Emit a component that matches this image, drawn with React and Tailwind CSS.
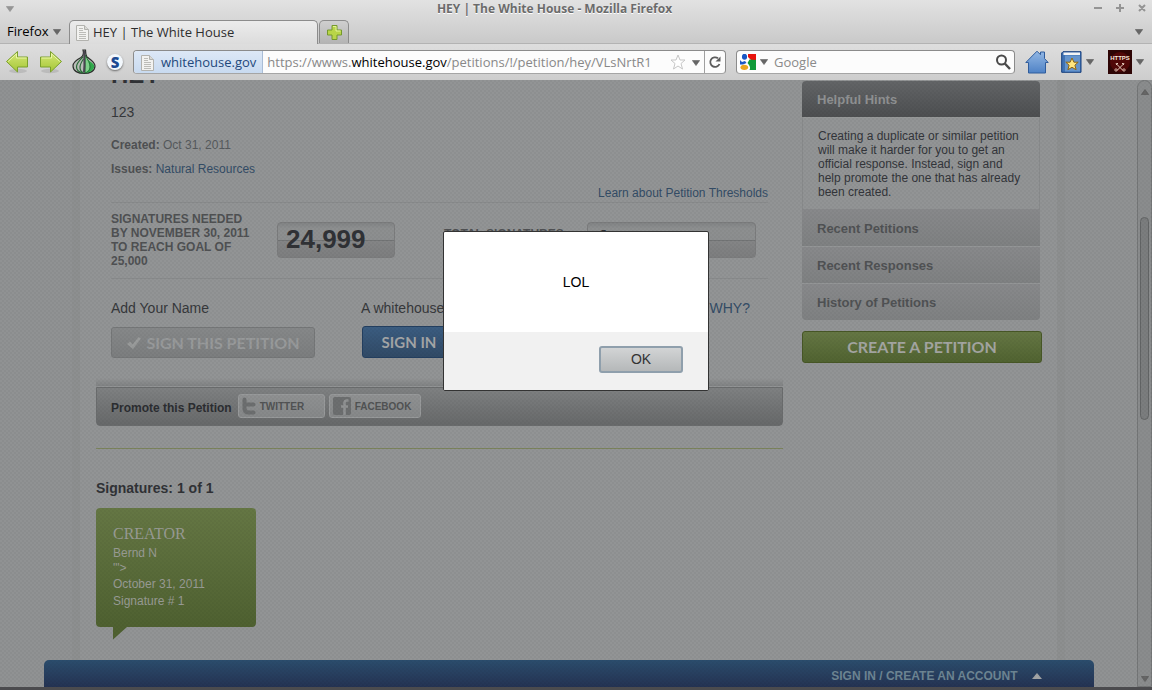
import React from "react";

const chromeFont = "font-['Open_Sans','Noto_Sans',sans-serif]";

function Caret({ className = "" }) {
  return (
    <svg viewBox="0 0 8 6" className={"h-[6px] w-2 shrink-0 " + className} aria-hidden="true">
      <path d="M.3.5h7.4L4 5.6z" fill="#666" stroke="#505050" strokeWidth=".5" />
    </svg>
  );
}

function PageIcon({ className = "" }) {
  return (
    <svg viewBox="0 0 13 16" className={"h-4 w-[13px] shrink-0 " + className} aria-hidden="true">
      <path d="M.5.5h8l4 4v11H.5z" fill="#f2f2f0" stroke="#b2b2ae" />
      <path d="M8.5.5v4h4" fill="#d9d9d6" stroke="#b2b2ae" />
      <path d="M3 3.5h4M3 5.5h4M3 7.5h7M3 9.5h7M3 11.5h7M3 13.5h7" stroke="#bcbcb8" />
    </svg>
  );
}

function Arrow({ flip }) {
  return (
    <svg viewBox="0 0 24 24" className={"h-6 w-6 " + (flip ? "-scale-x-100" : "")} aria-hidden="true">
      <defs>
        <linearGradient id={flip ? "ga" : "gb"} x1="0" y1="0" x2="0" y2="1">
          <stop offset="0" stopColor="#d6e878" />
          <stop offset="1" stopColor="#a4c636" />
        </linearGradient>
      </defs>
      <ellipse cx="13" cy="21" rx="9" ry="2.2" fill="#000" opacity=".1" />
      <path
        d="M1.5 11.5 12.5 1.500V7H22.500V17H12.500V22z"
        fill={flip ? "url(#ga)" : "url(#gb)"}
        stroke="#7aa02c"
        strokeLinejoin="round"
      />
      <path d="M3.200 11.500 11.500 3.800V8H21.500" fill="none" stroke="#eaf5a8" />
    </svg>
  );
}

function OnionIcon() {
  return (
    <svg viewBox="0 0 24 26" className="h-[26px] w-6" aria-hidden="true">
      <path d="M11 1C12 4 12 6 9 8.500 4 11 1 13 1 17c0 5 5 7.500 11 7.500S23 22 23 17c0-4-4-6-8-9-1.500-2-1.500-4-1.500-7z" fill="#b9bdb8" stroke="#2c2f2c" strokeWidth="1.200" />
      <path d="M13 6c0 4 6 6 9 10 1 4-3 8-9.500 8z" fill="#2fa84a" />
      <path d="M13 6c3 5 5 8 5 12 0 3-2 5-5 6z" fill="#7fd08a" stroke="#1c6b2d" strokeWidth=".9" />
      <path d="M11 8C7 12 4.500 14 4.500 18c0 3 2.500 5 6 6M11.500 10c-2.500 3.500-3.500 5.500-3.500 8.500 0 3 1.500 4.500 3.500 5.500" fill="none" stroke="#2a6b38" strokeWidth="1.200" />
      <path d="M12.500 1.500c-.8 6 .8 10-.5 22" fill="none" stroke="#4a4550" strokeWidth="2" />
    </svg>
  );
}

function ScriptIcon() {
  return (
    <span className="flex h-4 w-4 items-center justify-center rounded-full bg-[#f3f8fd] text-[15px] leading-4 font-extrabold text-[#1d4a92] shadow-[0_1px_2px_rgba(0,0,0,0.5)]">
      S
    </span>
  );
}

function TitleBar() {
  return (
    <div className="flex h-5 items-start">
      <Caret className="mt-[6px] ml-[6px] opacity-60" />
      <h1 className="flex-1 pl-[7px] text-center text-xs leading-[18px] font-bold text-[#6b6b6b] [text-shadow:0_1px_0_#fff]">
        HEY | The White House - Mozilla Firefox
      </h1>
      <svg viewBox="0 0 60 12" className="mt-[2px] mr-1 h-3 w-[60px]" fill="none" stroke="#949494" strokeWidth="2" aria-hidden="true">
        <path d="M6 6h8M28 6h8M32 2v8M51 3l6 6M57 3l-6 6" />
      </svg>
    </div>
  );
}

function TabBar() {
  return (
    <div className="flex h-6 items-end border-b border-[#b3b3b3]">
      <button className="flex h-6 w-[69px] shrink-0 items-center gap-1 pt-px pl-[7px] text-[13px] text-black">
        Firefox
        <Caret />
      </button>
      <div className="-mb-px flex h-6 w-[249px] items-center gap-1 rounded-t-[5px] border border-b-0 border-[#8c8c8c] bg-gradient-to-b from-[#ececec] to-[#dcdcdc] pl-[6px] text-[13px] text-[#2e2e2e]">
        <PageIcon />
        HEY | The White House
      </div>
      <button aria-label="Open a new tab" className="ml-px flex h-[23px] w-[30px] items-center justify-center rounded-t-[5px] border border-b-0 border-[#8c8c8c] bg-gradient-to-b from-[#cfcfcf] to-[#b4b4b4]">
        <svg viewBox="0 0 17 17" className="h-[17px] w-[17px]" aria-hidden="true">
          <path d="M6 1.500h5V6h4.500v5H11v4.500H6V11H1.500V6H6z" fill="#b9d548" stroke="#75992c" />
          <path d="M7 2.500h3V7h4.500" fill="none" stroke="#e2f29a" />
        </svg>
      </button>
      <Caret className="mr-[9px] mb-2 ml-auto" />
    </div>
  );
}

function ToolBar() {
  return (
    <div className="flex h-9 items-center bg-gradient-to-b from-[#dedede] to-[#cdcdcd] pr-2 pl-[5px]">
      <button aria-label="Back"><Arrow /></button>
      <button aria-label="Forward" className="ml-[10px]"><Arrow flip /></button>
      <button aria-label="Tor" className="ml-[9px]"><OnionIcon /></button>
      <button aria-label="Scripts" className="ml-[11px]"><ScriptIcon /></button>
      <div className="ml-[10px] flex h-6 flex-1 overflow-hidden rounded-[4px] border border-[#8b8b8b] border-b-[#a5a5a5] bg-[#fcfcfc]">
        <span className="flex items-center gap-[7px] border-r border-[#a9bdd6] bg-gradient-to-b from-[#dde8f6] to-[#c8daf0] pt-px pr-[6px] pl-[7px] text-[13px] text-[#23497c]">
          <PageIcon />
          whitehouse.gov
        </span>
        <span className="flex flex-1 items-center overflow-hidden pt-px pl-1 text-[13px] whitespace-nowrap text-[#888]">
          https://wwws.<span className="text-black">whitehouse.gov</span>/petitions/!/petition/hey/VLsNrtR1
        </span>
        <svg viewBox="0 0 16 16" className="mt-[3px] h-4 w-4 shrink-0" aria-hidden="true">
          <path d="M8 1l2 5h5l-4 3.500 1.500 5.500L8 12l-4.500 3L5 9.500 1 6h5z" fill="#fff" stroke="#c6c6c6" strokeLinejoin="round" />
        </svg>
        <Caret className="mt-[9px] mr-1 ml-[6px]" />
        <button aria-label="Reload" className="flex w-[21px] shrink-0 items-center justify-center border-l border-[#a0a0a0]">
          <svg viewBox="0 0 14 14" className="h-[14px] w-[14px]" aria-hidden="true">
            <path d="M11.500 9A4.800 4.800 0 1 1 10 3.300" fill="none" stroke="#5c5c5c" strokeWidth="1.800" />
            <path d="M12.500 1.500v5H7.500z" fill="#5c5c5c" />
          </svg>
        </button>
      </div>
      <div className="ml-[10px] flex h-6 w-[279px] items-center rounded-[4px] border border-[#8b8b8b] border-b-[#a5a5a5] bg-[#fcfcfc] px-[3px]">
        <svg viewBox="0 0 16 16" className="h-4 w-4 shrink-0" aria-hidden="true">
          <rect width="16" height="16" fill="#fff" />
          <path d="M8 0h8v6H11L8 3z" fill="#e8120c" />
          <path d="M9.500 5.500 16 6v10h-6.500C11 13 9 11 7.500 9z" fill="#109a38" />
          <ellipse cx="4.500" cy="2.800" rx="2.600" ry="3" fill="#1b57c4" />
          <path d="M0 6 2 8l3-1 1.500 2L3 10.500H0z" fill="#1b57c4" />
          <ellipse cx="4.300" cy="13.300" rx="3.800" ry="2.600" fill="#eaa51e" />
        </svg>
        <Caret className="ml-1" />
        <input aria-label="Search" placeholder="Google" className="ml-[6px] min-w-0 flex-1 bg-transparent pt-px text-[13px] outline-none placeholder:text-[#8a8a8a]" />
        <svg viewBox="0 0 16 16" className="h-4 w-4 shrink-0" aria-hidden="true">
          <circle cx="6.500" cy="6" r="4.500" fill="none" stroke="#4a4a4a" strokeWidth="2" />
          <path d="M9.800 9.500 15 15" stroke="#4a4a4a" strokeWidth="2.400" />
        </svg>
      </div>
      <button aria-label="Home" className="ml-[10px]">
        <svg viewBox="0 0 24 24" className="h-6 w-6" aria-hidden="true">
          <defs>
            <linearGradient id="roof" x1="0" y1="0" x2="0" y2="1">
              <stop offset="0" stopColor="#93b8e4" />
              <stop offset="1" stopColor="#4f82c6" />
            </linearGradient>
          </defs>
          <path d="M3.500 12.500H.8L12 1.200l3.500 3.500V2h4v6.500l3.700 4h-2.700V23h-17z" fill="url(#roof)" stroke="#2f5c9c" strokeLinejoin="round" />
        </svg>
      </button>
      <button aria-label="Bookmarks" className="ml-[11px] flex items-center gap-1">
        <svg viewBox="0 0 22 23" className="h-[23px] w-[22px]" aria-hidden="true">
          <path d="M3 .7h18v20.600H1.700V2z" fill="#3f72b4" stroke="#163e7c" />
          <path d="M3.500 1.500H20V4H3.500z" fill="#f4f4f4" />
          <path d="M5 4.500h15v16H5z" fill="#6594cc" />
          <path d="M12 7l1.900 4.200h4.300l-3.300 3 1.200 4.500L12 16.300l-4.100 2.400 1.200-4.500-3.300-3h4.300z" fill="#ffe680" stroke="#8f6410" />
        </svg>
        <Caret />
      </button>
      <button aria-label="HTTPS Everywhere" className="ml-[14px] flex items-center gap-1">
        <svg viewBox="0 0 24 24" className="h-6 w-6" aria-hidden="true">
          <rect width="24" height="24" fill="#2e0505" />
          <circle cx="12" cy="12" r="10" fill="#500808" />
          <text x="12" y="10" textAnchor="middle" fontSize="6" fontWeight="bold" fontFamily="Liberation Sans" fill="#f2e6dc">HTTPS</text>
          <path d="M8 13.500l7 7M16 13.500l-7 7M8.500 15v-1.500h1.500M14 13.500h1.500V15" stroke="#e8cdbd" fill="none" />
          <circle cx="8" cy="20" r="1.200" fill="none" stroke="#e8cdbd" strokeWidth=".8" />
          <circle cx="16" cy="20" r="1.200" fill="none" stroke="#e8cdbd" strokeWidth=".8" />
        </svg>
        <Caret />
      </button>
    </div>
  );
}

function Counter({ className, children }) {
  return (
    <div className={"h-9 rounded-[4px] border border-[#7b7c7d] bg-[linear-gradient(#828485_0,#8d8f90_16%,#8c8e8f_50%,#727475_50%,#727475_53%,#848586_53%,#7d7e7f_100%)] pl-2 text-[26px] leading-[33px] font-bold text-[#303236] " + className}>
      {children}
    </div>
  );
}

function Share({ icon, label, className }) {
  return (
    <button className={"flex h-6 items-center gap-1 rounded-[3px] border border-[#989a9b] bg-gradient-to-b from-[#8f9192] to-[#868889] pl-[3px] text-[10px] font-bold text-[#515354] " + className}>
      {icon}
      {label}
    </button>
  );
}

function Petition() {
  return (
    <main className="min-w-0 flex-1">
      <div className="px-[15px]">
        <h2 className="-mt-[19px] text-2xl leading-7 font-bold text-[#303236]">HEY</h2>
        <p className="mt-[14px] text-sm leading-[18px] text-[#36383b]">123</p>
        <p className="mt-4 text-xs leading-4 text-[#565a5d]"><b className="text-[#4f5153]">Created:</b> Oct 31, 2011</p>
        <p className="mt-2 text-xs leading-4"><b className="text-[#4f5153]">Issues:</b> <a href="#resources" className="text-[#334c66]">Natural Resources</a></p>
        <p className="mt-2 text-right text-xs leading-4"><a href="#thresholds" className="text-[#334c66]">Learn about Petition Thresholds</a></p>
        <section className="mt-px flex h-[77px] items-start border-y border-[#888a8b]">
          <p className="mt-[9px] w-[166px] text-xs leading-[14px] font-bold text-[#4f5153]">
            SIGNATURES NEEDED<br />BY NOVEMBER 30, 2011<br />TO REACH GOAL OF<br />25,000
          </p>
          <Counter className="mt-[19px] w-[118px]">24,999</Counter>
          <p className="mt-6 ml-[49px] w-[143px] text-xs leading-[14px] font-bold text-[#4f5153]">TOTAL SIGNATURES</p>
          <Counter className="mt-[19px] mr-3 flex-1">1</Counter>
        </section>
        <section className="mt-[19px] flex items-start">
          <div className="w-[250px]">
            <p className="text-sm leading-5 text-[#36383b]">Add Your Name</p>
            <button className="mt-[9px] flex h-[31px] w-[204px] items-center justify-center gap-1 rounded-[3px] border border-[#757778] bg-gradient-to-b from-[#868889] to-[#7c7e7f] font-['Lato',sans-serif] text-base font-bold text-[#989a9b]">
              <svg viewBox="0 0 16 14" className="h-[14px] w-4" aria-hidden="true"><path d="M1 8l3-2.500 2.500 3L12.500 1 15 2.500 7 13z" fill="#999b9b" /></svg>
              SIGN THIS PETITION
            </button>
          </div>
          <div className="flex-1">
            <p className="flex justify-between pr-[18px] text-sm leading-5 text-[#36383b]"><span>A whitehouse.gov account is required to sign.</span><a href="#why" className="text-[#334c66]">WHY?</a></p>
            <button className="mt-2 ml-px h-8 w-[94px] rounded-[3px] border border-[#233f60] bg-gradient-to-b from-[#3b5d81] to-[#314a66] font-['Lato',sans-serif] text-[15px] font-bold text-[#a3a5a6]">SIGN IN</button>
          </div>
        </section>
      </div>
      <div className="mt-5 h-2 bg-gradient-to-b from-transparent to-[#808283]" />
      <section className="mt-px flex h-[39px] items-center gap-1 rounded-b-[4px] border border-[#6a6c6d] bg-gradient-to-b from-[#7f8182] to-[#67696a] pl-[14px]">
        <h3 className="mr-[2px] pt-[2px] text-xs font-bold text-[#2b2d31]">Promote this Petition</h3>
        <Share className="mb-px w-[87px]" label="TWITTER" icon={<svg viewBox="0 0 14 18" className="h-[18px] w-[14px]" aria-hidden="true"><path d="M2.500 2.500v9q0 4 4 4h5M2.500 7.500h9" stroke="#6c6e6f" strokeWidth="4" strokeLinecap="round" fill="none" /></svg>} />
        <Share className="mb-px w-[92px]" label="FACEBOOK" icon={<svg viewBox="0 0 18 18" className="h-[18px] w-[18px]" aria-hidden="true"><rect width="18" height="18" rx="2" fill="#6c6e6f" /><path d="M15.500 3.500h-1.500q-2.500 0-2.500 2.500V18M8 9.500h7" stroke="#909293" strokeWidth="2.600" fill="none" /></svg>} />
      </section>
      <div className="mt-[22px] border-t border-[#7b835c]" />
      <h3 className="mt-[29px] text-sm leading-5 font-bold text-[#303236]">Signatures: 1 of 1</h3>
      <article className="mt-[10px] h-[119px] w-40 rounded-[4px] bg-gradient-to-b from-[#657744] to-[#4f6131] pt-[15px] pl-[17px] text-xs text-[#989b94]">
        <h4 className="font-['Liberation_Serif',serif] text-base leading-[22px]">CREATOR</h4>
        <p className="leading-4">Bernd N</p>
        <p className="leading-[14px]">'"&gt;</p>
        <p className="leading-[18px]">October 31, 2011</p>
        <p className="leading-4">Signature # 1</p>
      </article>
      <svg viewBox="0 0 14 13" className="ml-[17px] h-[13px] w-[14px]" aria-hidden="true"><path d="M0 0h14L0 12.500z" fill="#4f6131" /></svg>
    </main>
  );
}

function Sidebar() {
  return (
    <aside className="w-60 shrink-0">
      <div className="mt-px mr-[2px] overflow-hidden rounded-[4px]">
        <h3 className="h-9 bg-gradient-to-b from-[#636567] to-[#4d4f51] pl-[15px] text-[13px] leading-[38px] font-bold text-[#8f9192]">Helpful Hints</h3>
        <p className="border-x border-t border-[#888a8b] border-t-[#979999] px-[15px] pt-[11px] pb-[10px] text-xs leading-[14px] text-[#33353a]">
          Creating a duplicate or similar petition will make it harder for you to get an official response. Instead, sign and help promote the one that has already been created.
        </p>
        {["Recent Petitions", "Recent Responses", "History of Petitions"].map((t, i) => (
          <a key={t} href="#list" className={"block h-[37px] bg-gradient-to-b from-[#88898b] to-[#7f8182] pl-[15px] text-[13px] font-bold text-[#505254] " + (i ? "border-t border-[#949697] leading-[37px]" : "leading-[39px]")}>{t}</a>
        ))}
      </div>
      <button className="mt-[11px] h-8 w-full rounded-[3px] border border-[#475726] bg-gradient-to-b from-[#657744] to-[#516331] font-['Lato',sans-serif] text-base font-bold text-[#a3a5a1]">CREATE A PETITION</button>
    </aside>
  );
}

function ScrollBar() {
  return (
    <div className="flex w-[15px] shrink-0 flex-col items-center rounded-t-lg border border-[#747677] bg-[#8a8c8d]" aria-hidden="true">
      <Caret className="mt-2 -scale-y-100" />
      <div className="mt-[122px] h-[203px] w-[9px] rounded-full border border-[#626465] bg-[#7b7d7e]" />
      <Caret className="mt-auto mb-1" />
    </div>
  );
}

export default function App() {
  return (
    <div className={"flex h-screen flex-col overflow-hidden bg-[#4b4b4e] " + chromeFont}>
      <header className="shrink-0 bg-gradient-to-b from-[#e2e2e2] to-[#cbcbcb] to-50%">
        <TitleBar />
        <TabBar />
        <ToolBar />
      </header>
      <div className="relative mb-[3px] flex min-h-0 flex-1 bg-[#909293] font-['Liberation_Sans',Arial,sans-serif]">
        <div className="flex min-w-0 flex-1 flex-col">
          <div className="mx-auto flex min-h-0 w-full max-w-[993px] flex-1 gap-[19px] overflow-hidden border-x-8 border-[#8d8f90] bg-[#929495] pr-[15px] pl-4">
            <Petition />
            <Sidebar />
          </div>
          <footer className="mx-auto flex h-[27px] w-full max-w-[1050px] shrink-0 items-center justify-end gap-[14px] rounded-t-[5px] bg-gradient-to-b from-[#2b4d6d] to-[#243353] pt-1 pr-[52px]">
            <a href="#signin" className="text-xs font-bold text-[#6d8593]">SIGN IN / CREATE AN ACCOUNT</a>
            <svg viewBox="0 0 10 6" className="h-[6px] w-[10px]" aria-hidden="true"><path d="M0 6 5 0l5 6z" fill="#a3a5a6" /></svg>
          </footer>
        </div>
        <ScrollBar />
        <div className="absolute inset-0 flex items-start justify-center bg-[conic-gradient(#00000008_25%,transparent_0_50%,#00000008_0_75%,transparent_0)] bg-[size:4px_4px] pt-[151px]">
          <div role="alertdialog" aria-label="LOL" className="w-[266px] overflow-hidden rounded-[2px] border border-[#333] bg-white">
            <p className="flex h-[100px] items-center justify-center text-sm text-black">LOL</p>
            <div className="flex h-[58px] items-center justify-end bg-[#f1f1f1] pr-[25px] pb-1">
              <button className="h-[27px] w-[84px] rounded-[3px] border-2 border-[#8f9fac] bg-gradient-to-b from-[#d2d4d5] to-[#b5b8b9] text-sm text-[#333]">OK</button>
            </div>
          </div>
        </div>
      </div>
    </div>
  );
}
